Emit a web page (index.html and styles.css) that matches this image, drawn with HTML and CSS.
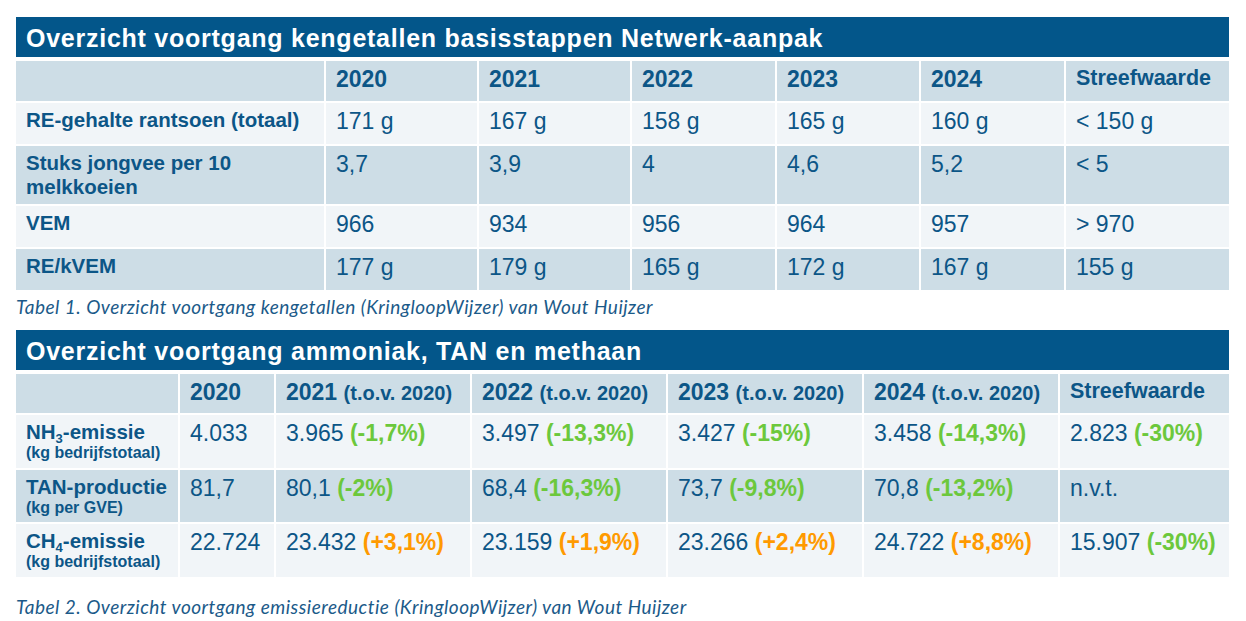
FILE: index.html
```html
<!DOCTYPE html>
<html lang="nl">
<head>
<meta charset="utf-8">
<title>Overzicht voortgang</title>
<link rel="stylesheet" href="styles.css">
</head>
<body>
<main class="page">
  <section class="block">
    <h2 class="title">Overzicht voortgang kengetallen basisstappen Netwerk-aanpak</h2>
    <table class="data t1">
      <colgroup><col><col><col><col><col><col><col></colgroup>
      <tr class="head h40">
        <th></th><th>2020</th><th>2021</th><th>2022</th><th>2023</th><th>2024</th><th class="target">Streefwaarde</th>
      </tr>
      <tr class="light h41">
        <th>RE-gehalte rantsoen (totaal)</th><td>171 g</td><td>167 g</td><td>158 g</td><td>165 g</td><td>160 g</td><td>&lt; 150 g</td>
      </tr>
      <tr class="shade h58">
        <th>Stuks jongvee per 10 melkkoeien</th><td>3,7</td><td>3,9</td><td>4</td><td>4,6</td><td>5,2</td><td>&lt; 5</td>
      </tr>
      <tr class="light h41">
        <th>VEM</th><td>966</td><td>934</td><td>956</td><td>964</td><td>957</td><td>&gt; 970</td>
      </tr>
      <tr class="shade h41">
        <th>RE/kVEM</th><td>177 g</td><td>179 g</td><td>165 g</td><td>172 g</td><td>167 g</td><td>155 g</td>
      </tr>
    </table>
    <p class="caption cap1">Tabel 1. Overzicht voortgang kengetallen (KringloopWijzer) van Wout Huijzer</p>
  </section>

  <section class="block">
    <h2 class="title">Overzicht voortgang ammoniak, TAN en methaan</h2>
    <table class="data t2">
      <colgroup><col><col><col><col><col><col><col></colgroup>
      <tr class="head h39">
        <th></th>
        <th>2020</th>
        <th>2021 <span class="rel">(t.o.v. 2020)</span></th>
        <th>2022 <span class="rel">(t.o.v. 2020)</span></th>
        <th>2023 <span class="rel">(t.o.v. 2020)</span></th>
        <th>2024 <span class="rel">(t.o.v. 2020)</span></th>
        <th class="target">Streefwaarde</th>
      </tr>
      <tr class="light h53">
        <th>NH<sub>3</sub>-emissie<span class="unit">(kg bedrijfstotaal)</span></th>
        <td>4.033</td>
        <td>3.965 <b class="down">(-1,7%)</b></td>
        <td>3.497 <b class="down">(-13,3%)</b></td>
        <td>3.427 <b class="down">(-15%)</b></td>
        <td>3.458 <b class="down">(-14,3%)</b></td>
        <td>2.823 <b class="down">(-30%)</b></td>
      </tr>
      <tr class="shade h52">
        <th>TAN-productie<span class="unit">(kg per GVE)</span></th>
        <td>81,7</td>
        <td>80,1 <b class="down">(-2%)</b></td>
        <td>68,4 <b class="down">(-16,3%)</b></td>
        <td>73,7 <b class="down">(-9,8%)</b></td>
        <td>70,8 <b class="down">(-13,2%)</b></td>
        <td>n.v.t.</td>
      </tr>
      <tr class="light h53">
        <th>CH<sub>4</sub>-emissie<span class="unit">(kg bedrijfstotaal)</span></th>
        <td>22.724</td>
        <td>23.432 <b class="up">(+3,1%)</b></td>
        <td>23.159 <b class="up">(+1,9%)</b></td>
        <td>23.266 <b class="up">(+2,4%)</b></td>
        <td>24.722 <b class="up">(+8,8%)</b></td>
        <td>15.907 <b class="down">(-30%)</b></td>
      </tr>
    </table>
    <p class="caption cap2">Tabel 2. Overzicht voortgang emissiereductie (KringloopWijzer) van Wout Huijzer</p>
  </section>
</main>
</body>
</html>
```

FILE: styles.css
```css
html, body {
  margin: 0;
  padding: 0;
  background: #ffffff;
}

body {
  font-family: "Liberation Sans", Arial, sans-serif;
  color: #0c5687;
}

.page {
  padding: 17px 17px 0 16px;
}

.title {
  margin: 0;
  width: 1213px;
  height: 40px;
  box-sizing: border-box;
  padding: 3px 10px 0;
  line-height: 37px;
  background: #03568a;
  color: #ffffff;
  font-size: 25px;
  letter-spacing: 0.75px;
  font-weight: bold;
  white-space: nowrap;
}

.data {
  border-collapse: separate;
  border-spacing: 2px;
  table-layout: fixed;
  width: 1217px;
  margin: 2px -2px 0;
}

.data th,
.data td {
  padding: 5px 10px 0;
  vertical-align: top;
  text-align: left;
  line-height: 1.15;
}

.data td {
  font-size: 23px;
  font-weight: normal;
}

.data th {
  font-size: 20.5px;
  font-weight: bold;
}

.data .head th {
  font-size: 23px;
}

.data .head th.target {
  font-size: 21.5px;
}

.head > * { background: #cddde6; }
.light > * { background: #f1f5f8; }
.shade > * { background: #cddde6; }

.h39 { height: 39px; }
.h40 { height: 40px; }
.h41 { height: 41px; }
.h52 { height: 52px; }
.h53 { height: 53px; }
.h58 { height: 58px; }

/* column widths: table 1 */
.t1 col:nth-child(1) { width: 308px; }
.t1 col:nth-child(2) { width: 151px; }
.t1 col:nth-child(3) { width: 151px; }
.t1 col:nth-child(4) { width: 143px; }
.t1 col:nth-child(5) { width: 142px; }
.t1 col:nth-child(6) { width: 143px; }
.t1 col:nth-child(7) { width: 163px; }

/* column widths: table 2 */
.t2 col:nth-child(1) { width: 162px; }
.t2 col:nth-child(2) { width: 94px; }
.t2 col:nth-child(3) { width: 194px; }
.t2 col:nth-child(4) { width: 194px; }
.t2 col:nth-child(5) { width: 194px; }
.t2 col:nth-child(6) { width: 194px; }
.t2 col:nth-child(7) { width: 169px; }

.rel {
  font-size: 20px;
}

.unit {
  display: block;
  font-size: 16px;
  line-height: 18px;
}

sub {
  font-size: 13px;
  line-height: 0;
  vertical-align: -4px;
}

.down { color: #6cc83c; font-weight: bold; }
.up { color: #ff9a00; font-weight: bold; }

.caption {
  margin: 0;
  font-family: Lato, "Open Sans", sans-serif;
  font-style: italic;
  font-size: 19px;
  letter-spacing: 0.5px;
  line-height: 22px;
  color: #1b5a89;
  white-space: nowrap;
}

.cap1 {
  margin-top: 4px;
  margin-bottom: 12px;
}

.cap2 {
  margin-top: 17px;
}
```
